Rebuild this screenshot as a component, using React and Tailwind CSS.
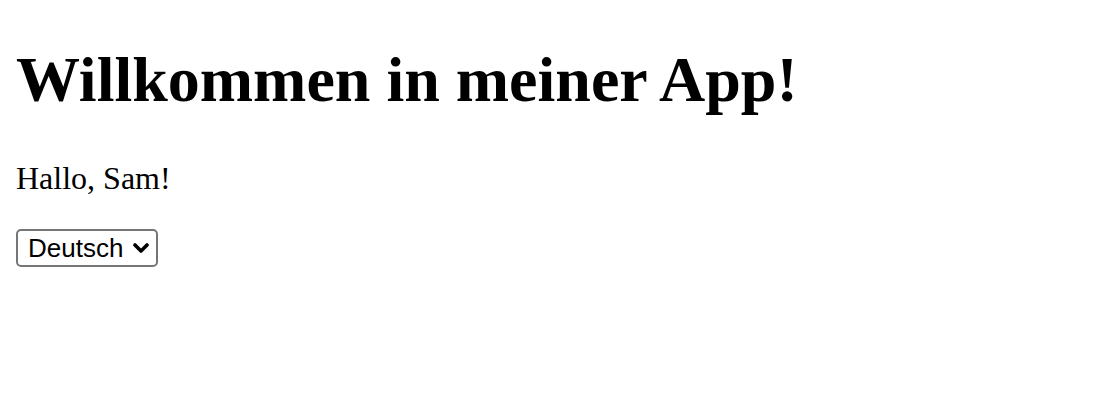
export default function App() {
  return (
    <div className="min-h-[420px] bg-white px-4 pt-[43px] text-black" style={{ fontFamily: '"Liberation Serif", "Times New Roman", serif' }}>
      <h1 className="m-0 text-[64px] font-bold leading-[normal]">Willkommen in meiner App!</h1>
      <p className="mt-[43px] mb-8 text-[32px] leading-[normal]">Hallo, Sam!</p>
      <div className="relative inline-block">
        <select
          defaultValue="de"
          className="h-[38px] w-[142px] appearance-none rounded-[5px] border-2 border-[#767676] bg-white pl-[10px] pr-[30px] text-[26px] leading-[normal] text-black outline-none"
          style={{ fontFamily: '"Liberation Sans", Arial, sans-serif' }}
        >
          <option value="de">Deutsch</option>
          <option value="en">English</option>
        </select>
        <svg
          className="pointer-events-none absolute left-[117px] top-[14px]"
          width="16"
          height="10"
          viewBox="0 0 16 10"
          fill="none"
        >
          <path d="M2 2 L8 8 L14 2" stroke="black" strokeWidth="3.6" strokeLinecap="round" strokeLinejoin="round" />
        </svg>
      </div>
    </div>
  );
}
